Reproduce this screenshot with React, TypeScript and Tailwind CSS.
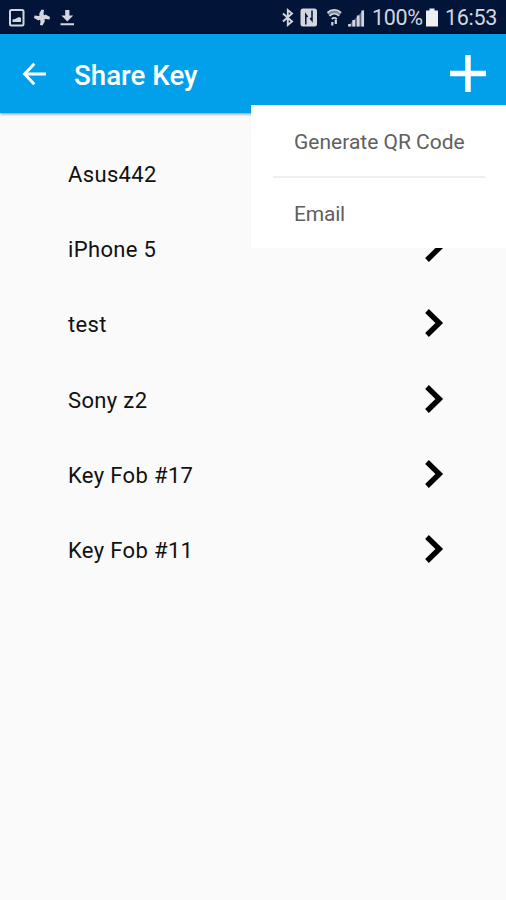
const devices = ["Asus442", "iPhone 5", "test", "Sony z2", "Key Fob #17", "Key Fob #11"]

function StatusBar() {
  return (
    <div className="flex h-[34px] items-center justify-between border-b border-black bg-[#021538] text-[#d3d6de]">
      <svg width="80" height="33" viewBox="0 0 80 33" fill="none">
        {/* Screenshot */}
        <rect x="10" y="10" width="13.5" height="15.5" rx="1.5" stroke="currentColor" strokeWidth="2" />
        <path d="M12.5 22v-2.5l2.5-.5 4-2 2 1v4z" fill="currentColor" />
        {/* Pinwheel */}
        <g fill="currentColor" transform="translate(42 17.5)">
          <path d="M0 1L-3-3.5-.5-8 2-7.500 1.500-3.500 3-1z" />
          <path d="M0 1L-3-3.5-.5-8 2-7.500 1.500-3.500 3-1z" transform="rotate(90)" />
          <path d="M0 1L-3-3.5-.5-8 2-7.500 1.500-3.500 3-1z" transform="rotate(180)" />
          <path d="M0 1L-3-3.5-.5-8 2-7.500 1.500-3.500 3-1z" transform="rotate(270)" />
        </g>
        {/* Download */}
        <path d="M65.2 10h4.2v5.5h3.8l-5.9 6-5.9-6h3.8zM60.5 23.2h13.5v2.1H60.5z" fill="currentColor" />
      </svg>

      <div className="flex items-center">
        <svg width="92" height="33" viewBox="280 0 92 33" fill="none" stroke="currentColor">
          {/* Bluetooth */}
          <path d="M283 13.5l9 8-4.2 3.5V10l4.2 3.5-9 8" strokeWidth="1.9" />
          {/* NFC */}
          <rect x="300.5" y="8.5" width="16.5" height="18" rx="2.5" fill="currentColor" stroke="none" />
          <path d="M305.8 24.500V14.500l1.800 2.500M312 10.500v10l-1.800-2.500" stroke="#021538" strokeWidth="1.500" />
          {/* Wi-Fi */}
          <path d="M327 12.6c4-4 10.5-4 14.5 0l-2.200 3.200c-3-2.600-7-2.600-10 0z" fill="currentColor" stroke="none" opacity=".6" />
          <path d="M327.5 12.6c4-3.800 9.500-3.800 13.500 0M329.500 16c3-2.800 6.800-2.800 9.500 0M331.700 19c1.700-1.500 3.600-1.500 5.200 0" strokeWidth="1.700" />
          <path d="M332.300 25.500v-3.500M335.800 19.500v4.500" strokeWidth="2.200" />
          {/* Signal */}
          <path d="M347.500 26.500L364 9.500v17z" fill="currentColor" stroke="none" opacity=".4" />
          <path d="M349.500 26.500v-2.500M353.700 26.500v-6.500M358.200 26.500v-11M362.700 26.500v-16" strokeWidth="2.700" />
        </svg>
        <span className="mt-[2px] w-[51px] whitespace-nowrap text-[21.5px] leading-none tracking-[-0.3px]">100%</span>
        <svg width="12" height="33" viewBox="0 0 12 33" className="ml-[3px]" fill="#eeeff1">
          <path d="M3.5 8.5h5v2H12v16H0v-16h3.5z" />
        </svg>
        <span className="ml-[7px] mt-[2px] w-[61px] whitespace-nowrap text-[21.5px] leading-none tracking-[-0.3px]">16:53</span>
      </div>
    </div>
  )
}

function Header() {
  return (
    <header className="relative flex h-[79px] items-center bg-[#02a0ea] text-white shadow-[0_1px_3px_rgba(0,0,0,0.45)]">
      <button className="ml-[22px]" aria-label="Back">
        <svg width="24" height="24" viewBox="0 0 24 24" fill="none" stroke="currentColor" strokeWidth="2.9">
          <path d="M12.3 1.8L2.6 12l9.7 10.2M2.6 12H24" />
        </svg>
      </button>
      <h1 className="ml-[28px] mt-[4px] text-[27.7px] font-medium leading-none">Share Key</h1>
      <button className="ml-auto mr-5" aria-label="Add">
        <svg width="36" height="37" viewBox="0 0 36 37" fill="none" stroke="currentColor" strokeWidth="5.5">
          <path d="M0 18.5h36M18 0v37" />
        </svg>
      </button>
    </header>
  )
}

function ShareMenu() {
  return (
    <div className="absolute right-0 top-[105px] h-[143px] w-[255px] bg-white px-[21px] text-[21px] text-[#606060] shadow-[0_0_1px_rgba(0,0,0,0.06)]">
      <div className="ml-px flex h-[73px] items-center border-b-2 border-[#eeeeee] px-[21px] pt-[4px]">
        <span className="whitespace-nowrap">Generate QR Code</span>
      </div>
      <div className="flex h-[72px] items-center px-[22px] pt-[2px] tracking-[-0.2px]">Email</div>
    </div>
  )
}

export default function App() {
  return (
    <div className="relative h-[900px] w-[506px] overflow-hidden bg-[#fafafa] font-[Roboto,sans-serif]">
      <StatusBar />
      <Header />

      <ul className="pt-[24px]">
        {devices.map((name) => (
          <li key={name} className="flex h-[75.2px] items-center justify-between pl-[68px] pr-[62px] text-[22px] text-[#111]">
            <span className="tracking-[0.35px]">{name}</span>
            <svg width="20" height="30" viewBox="0 0 20 30" className="-mt-[3px]" fill="none" stroke="#000" strokeWidth="5.3">
              <path d="M3 3l12.3 12L3 27" />
            </svg>
          </li>
        ))}
      </ul>

      <ShareMenu />
    </div>
  )
}
